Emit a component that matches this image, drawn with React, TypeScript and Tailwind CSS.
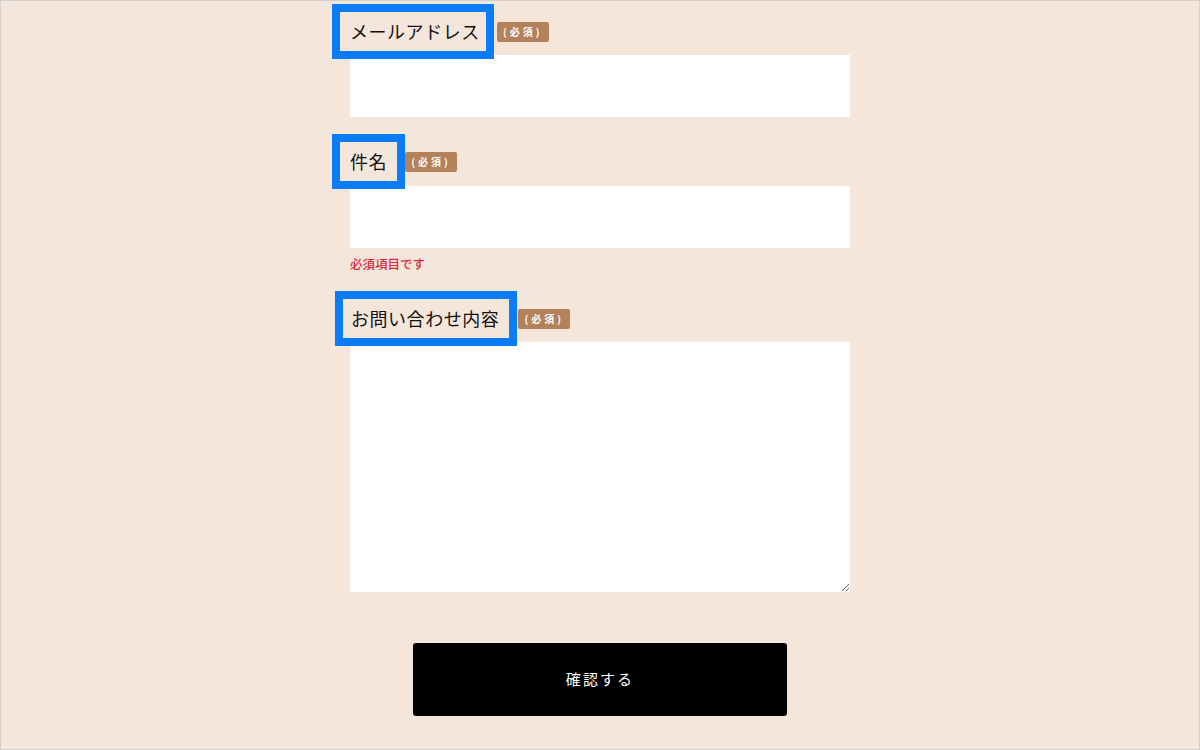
function Badge({ gap }: { gap: string }) {
  return (
    <span
      className={`flex h-[20px] w-[52px] items-center justify-center rounded-[2px] bg-[#b3815a] text-[10px] font-bold tracking-[0.3em] text-white ${gap}`}
    >
      (必須)
    </span>
  );
}

function FieldLabel({
  text,
  className,
  gap,
}: {
  text: string;
  className: string;
  gap: string;
}) {
  return (
    <div className="flex items-center">
      <label
        className={`flex h-[39px] items-center text-[18px] tracking-[0.03em] text-[#111] outline-8 outline-[#0a7cf8] ${className}`}
      >
        {text}
      </label>
      <Badge gap={gap} />
    </div>
  );
}

export default function App() {
  return (
    <div
      className="h-[750px] w-[1200px] overflow-hidden border border-[#d3d1cf] bg-[#f5e6dc]"
      style={{ fontFamily: '"Noto Sans CJK JP", "Noto Sans", sans-serif' }}
    >
      <form className="mx-auto w-[500px] pt-[11px]">
        {/* mail */}
        <FieldLabel
          text="メールアドレス"
          className="-ml-[10px] pl-[10px] pr-[6px]"
          gap="ml-[11px]"
        />
        <input
          type="email"
          className="mt-[4px] block h-[62px] w-full bg-white px-3 outline-none"
        />

        {/* subject */}
        <div className="mt-[25px]">
          <FieldLabel
            text="件名"
            className="-ml-[10px] pl-[10px] pr-[10px]"
            gap="ml-[8px]"
          />
        </div>
        <input
          type="text"
          className="mt-[5px] block h-[62px] w-full bg-white px-3 outline-none"
        />
        <p className="mt-[8px] text-[12.5px] font-medium leading-[15px] text-[#e0263f]">
          必須項目です
        </p>

        {/* message */}
        <div className="mt-[28px]">
          <FieldLabel
            text="お問い合わせ内容"
            className="-ml-[7px] pl-[8px] pr-[10px]"
            gap="ml-[9px]"
          />
        </div>
        <textarea className="mt-[4px] block h-[250px] w-full bg-white p-3 outline-none" />

        {/* submit */}
        <div className="mt-[51px] flex justify-center">
          <button
            type="button"
            className="h-[73px] w-[374px] rounded-[3px] bg-black text-[15px] tracking-[0.14em] text-white"
          >
            確認する
          </button>
        </div>
      </form>
    </div>
  );
}
